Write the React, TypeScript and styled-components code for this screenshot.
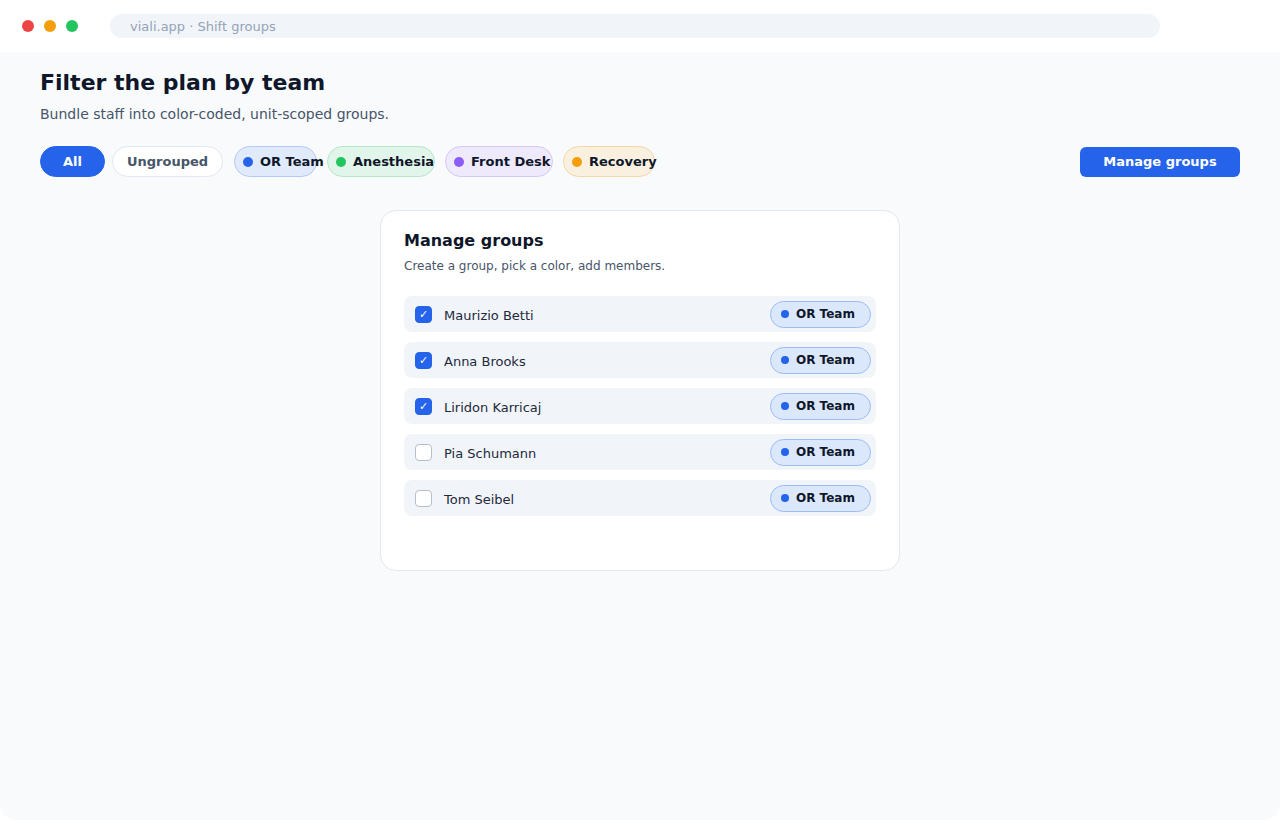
import React, { useState } from "react";
import styled, { createGlobalStyle } from "styled-components";

const GlobalStyle = createGlobalStyle`
  html, body {
    margin: 0;
    padding: 0;
    background: #ffffff;
    font-family: "DejaVu Sans", "Noto Sans", sans-serif;
  }
  * { box-sizing: border-box; }
`;

const Window = styled.div`
  width: 1280px;
  height: 820px;
  display: flex;
  flex-direction: column;
  border-radius: 16px;
  overflow: hidden;
  background: #f8fafc;
`;

const TitleBar = styled.div`
  height: 52px;
  flex-shrink: 0;
  display: flex;
  align-items: center;
  padding: 0 120px 0 22px;
  background: #ffffff;
`;

const Lights = styled.div`
  display: flex;
  gap: 10px;
  margin-right: 32px;
`;

const Light = styled.span<{ $c: string }>`
  width: 12px;
  height: 12px;
  border-radius: 50%;
  background: ${(p) => p.$c};
`;

const Address = styled.div`
  flex: 1;
  height: 24px;
  border-radius: 12px;
  background: #f1f5f9;
  color: #94a3b8;
  font-size: 13px;
  display: flex;
  align-items: center;
  padding-left: 20px;
`;

const Main = styled.main`
  flex: 1;
  padding: 17px 40px 0 40px;
  display: flex;
  flex-direction: column;
`;

const Title = styled.h1`
  margin: 0;
  font-size: 22px;
  font-weight: 700;
  color: #0f172a;
  line-height: 28px;
`;

const Lead = styled.p`
  margin: 7px 0 0;
  font-size: 14px;
  color: #475569;
  line-height: 20px;
`;

const Toolbar = styled.div`
  margin-top: 22px;
  display: flex;
  align-items: center;
`;

const Chips = styled.div`
  display: flex;
  align-items: center;
  flex: 1;
`;

const Chip = styled.button<{ $bg: string; $border: string; $color: string; $w: number; $gap: number }>`
  width: ${(p) => p.$w}px;
  height: 31px;
  margin-right: ${(p) => p.$gap}px;
  flex-shrink: 0;
  border-radius: 16px;
  border: 1px solid ${(p) => p.$border};
  background: ${(p) => p.$bg};
  color: ${(p) => p.$color};
  font-family: inherit;
  font-size: 13px;
  font-weight: 700;
  display: flex;
  align-items: center;
  padding: 0 0 0 8px;
  white-space: nowrap;
  overflow: visible;
  cursor: pointer;
`;

const CenterChip = styled(Chip)`
  justify-content: center;
  padding: 0;
`;

const Dot = styled.span<{ $c: string; $s: number }>`
  width: ${(p) => p.$s}px;
  height: ${(p) => p.$s}px;
  border-radius: 50%;
  background: ${(p) => p.$c};
  flex-shrink: 0;
  margin-right: 7px;
`;

const PrimaryButton = styled.button`
  width: 160px;
  height: 30px;
  border: 0;
  border-radius: 6px;
  background: #2563eb;
  color: #ffffff;
  font-family: inherit;
  font-size: 13px;
  font-weight: 700;
  cursor: pointer;
`;

const CardWrap = styled.div`
  display: flex;
  justify-content: center;
  margin-top: 33px;
`;

const Card = styled.section`
  width: 520px;
  min-height: 361px;
  background: #ffffff;
  border: 1px solid #e2e8f0;
  border-radius: 16px;
  padding: 19px 23px 24px;
`;

const CardTitle = styled.h2`
  margin: 0;
  font-size: 16px;
  font-weight: 700;
  color: #0f172a;
  line-height: 22px;
`;

const CardSub = styled.p`
  margin: 5px 0 0;
  font-size: 12px;
  color: #475569;
  line-height: 18px;
`;

const List = styled.div`
  margin-top: 21px;
  display: flex;
  flex-direction: column;
  gap: 10px;
`;

const Row = styled.label`
  height: 36px;
  border-radius: 8px;
  background: #f1f5f9;
  display: flex;
  align-items: center;
  padding: 0 5px 0 11px;
  cursor: pointer;
`;

const Box = styled.span<{ $on: boolean }>`
  width: 17px;
  height: 17px;
  border-radius: 4px;
  margin-top: 1px;
  flex-shrink: 0;
  display: flex;
  align-items: center;
  justify-content: center;
  background: ${(p) => (p.$on ? "#2563eb" : "#ffffff")};
  border: 1px solid ${(p) => (p.$on ? "#2563eb" : "#b5bfcc")};
  color: #ffffff;
  font-size: 11px;
`;

const Name = styled.span`
  margin-left: 12px;
  margin-top: 3px;
  flex: 1;
  font-size: 13px;
  color: #1e293b;
`;

const Badge = styled.span`
  width: 101px;
  height: 27px;
  border-radius: 14px;
  background: #dbe7fb;
  border: 1px solid #9bbcf5;
  display: flex;
  align-items: center;
  padding-left: 10px;
  font-size: 12px;
  font-weight: 700;
  color: #0f172a;
`;

const chips = [
  { label: "OR Team", dot: "#2563eb", bg: "#e1eafb", border: "#b3c9f6", w: 83, gap: 10 },
  { label: "Anesthesia", dot: "#22c55e", bg: "#e2f5ea", border: "#b5e6c8", w: 108, gap: 10 },
  { label: "Front Desk", dot: "#8b5cf6", bg: "#eee9fb", border: "#d4c8f6", w: 108, gap: 10 },
  { label: "Recovery", dot: "#f59e0b", bg: "#faf0df", border: "#f4d7a6", w: 92, gap: 0 },
];

const people = [
  { name: "Maurizio Betti", on: true },
  { name: "Anna Brooks", on: true },
  { name: "Liridon Karricaj", on: true },
  { name: "Pia Schumann", on: false },
  { name: "Tom Seibel", on: false },
];

const App = () => {
  const [members, setMembers] = useState(people);

  const toggle = (i: number) =>
    setMembers((prev) => prev.map((m, j) => (j === i ? { ...m, on: !m.on } : m)));

  return (
    <>
      <GlobalStyle />
      <Window>
        <TitleBar>
          <Lights>
            <Light $c="#ef4444" />
            <Light $c="#f59e0b" />
            <Light $c="#22c55e" />
          </Lights>
          <Address>viali.app · Shift groups</Address>
        </TitleBar>
        <Main>
          <Title>Filter the plan by team</Title>
          <Lead>Bundle staff into color-coded, unit-scoped groups.</Lead>
          <Toolbar>
            <Chips>
              <CenterChip $bg="#2563eb" $border="#2563eb" $color="#ffffff" $w={65} $gap={7}>
                All
              </CenterChip>
              <CenterChip $bg="#ffffff" $border="#e2e8f0" $color="#475569" $w={111} $gap={11}>
                Ungrouped
              </CenterChip>
              {chips.map((c) => (
                <Chip key={c.label} $bg={c.bg} $border={c.border} $color="#0f172a" $w={c.w} $gap={c.gap}>
                  <Dot $c={c.dot} $s={10} />
                  {c.label}
                </Chip>
              ))}
            </Chips>
            <PrimaryButton>Manage groups</PrimaryButton>
          </Toolbar>
          <CardWrap>
            <Card>
              <CardTitle>Manage groups</CardTitle>
              <CardSub>Create a group, pick a color, add members.</CardSub>
              <List>
                {members.map((m, i) => (
                  <Row key={m.name} onClick={() => toggle(i)}>
                    <Box $on={m.on}>{m.on ? "✓" : ""}</Box>
                    <Name>{m.name}</Name>
                    <Badge>
                      <Dot $c="#2563eb" $s={8} />
                      OR Team
                    </Badge>
                  </Row>
                ))}
              </List>
            </Card>
          </CardWrap>
        </Main>
      </Window>
    </>
  );
};

export default App;
